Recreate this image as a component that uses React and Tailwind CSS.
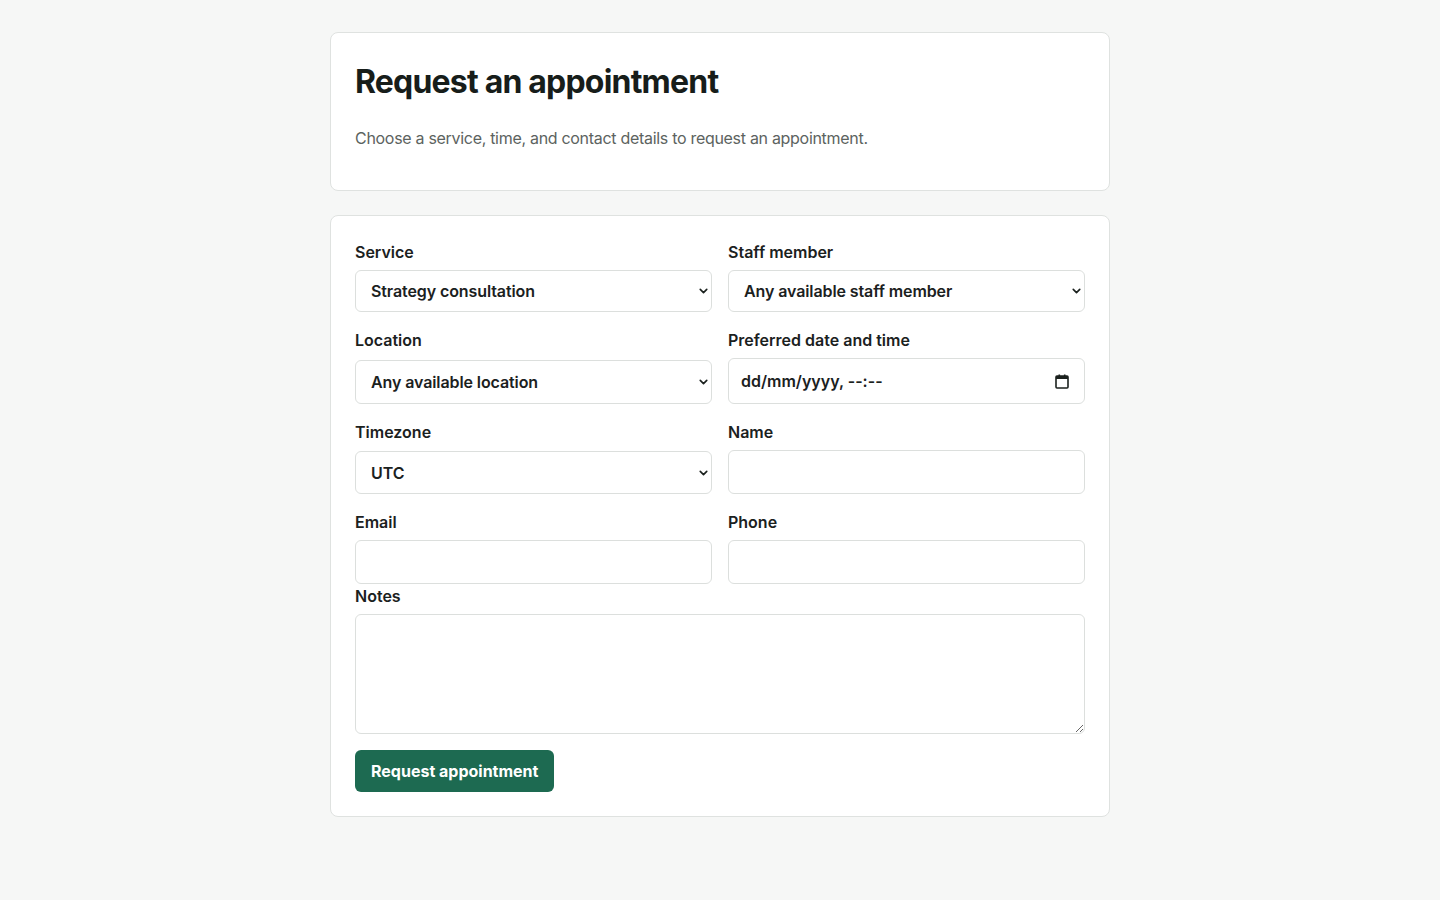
import { ChevronDown } from 'lucide-react';

const font = { fontFamily: 'Inter, "Noto Sans", sans-serif' };

function Label({ children }) {
  return <label className="block text-base leading-6 font-semibold text-[#1b211e]">{children}</label>;
}

function SelectBox({ value, h }) {
  return (
    <div className="relative">
      <select
        defaultValue={value}
        className={`w-full appearance-none rounded-md border border-[#dcdfdd] bg-white pl-[15px] pr-8 text-base font-semibold tracking-[-0.1px] text-[#1b211e] outline-none ${h}`}
      >
        <option>{value}</option>
      </select>
      <ChevronDown size={13} strokeWidth={3} className="pointer-events-none absolute right-[2px] top-1/2 -translate-y-1/2 text-[#1b211e]" />
    </div>
  );
}

function TextBox({ h }) {
  return <input type="text" className={`w-full rounded-md border border-[#dcdfdd] bg-white px-3 text-base outline-none ${h}`} />;
}

export default function App() {
  return (
    <div className="min-h-screen bg-[#f6f7f6] pt-8 pb-20" style={font}>
      <div className="mx-auto w-[780px] flex flex-col gap-6">
        {/* header card */}
        <div className="rounded-lg border border-[#dfe2e0] bg-white px-6 pt-[29px] pb-10">
          <h1 className="text-[32px] leading-10 font-bold tracking-[-0.025em] text-[#171d1a]">Request an appointment</h1>
          <p className="mt-6 text-base leading-6 tracking-[-0.3px] text-[#5c6360]">
            Choose a service, time, and contact details to request an appointment.
          </p>
        </div>

        {/* form card */}
        <div className="rounded-lg border border-[#dfe2e0] bg-white p-6">
          <div className="grid grid-cols-2 gap-x-4 gap-y-4">
            <div className="flex flex-col gap-1.5">
              <Label>Service</Label>
              <SelectBox value="Strategy consultation" h="h-[42px]" />
            </div>
            <div className="flex flex-col gap-1.5">
              <Label>Staff member</Label>
              <SelectBox value="Any available staff member" h="h-[42px]" />
            </div>

            <div className="flex flex-col justify-between">
              <Label>Location</Label>
              <SelectBox value="Any available location" h="h-[44px]" />
            </div>
            <div className="flex flex-col gap-1.5">
              <Label>Preferred date and time</Label>
              <div className="flex h-[46px] items-center justify-between rounded-md border border-[#dcdfdd] bg-white pl-3 pr-[15px]">
                <span className="text-base font-semibold text-[#1b211e]">dd/mm/yyyy, --:--</span>
                <svg width="14" height="15" viewBox="0 0 14 15" fill="none">
                  <rect x="1" y="2" width="12" height="12" rx="1" stroke="#1b211e" strokeWidth="1.6" />
                  <rect x="1" y="2" width="12" height="3" fill="#1b211e" />
                  <rect x="3.5" y="0.5" width="1.6" height="2.5" fill="#1b211e" />
                  <rect x="8.9" y="0.5" width="1.6" height="2.5" fill="#1b211e" />
                </svg>
              </div>
            </div>

            <div className="flex flex-col justify-between">
              <Label>Timezone</Label>
              <SelectBox value="UTC" h="h-[43px]" />
            </div>
            <div className="flex flex-col gap-1.5">
              <Label>Name</Label>
              <TextBox h="h-[44px]" />
            </div>

            <div className="flex flex-col gap-1.5">
              <Label>Email</Label>
              <TextBox h="h-[44px]" />
            </div>
            <div className="flex flex-col gap-1.5">
              <Label>Phone</Label>
              <TextBox h="h-[44px]" />
            </div>
          </div>

          <div className="flex flex-col gap-1.5">
            <Label>Notes</Label>
            <textarea className="block h-[120px] w-full resize-y rounded-md border border-[#dcdfdd] bg-white px-3 py-2 text-base outline-none" />
          </div>

          <button className="mt-4 h-[42px] rounded-md bg-[#1d6a51] px-4 text-base font-bold text-white">
            Request appointment
          </button>
        </div>
      </div>
    </div>
  );
}
